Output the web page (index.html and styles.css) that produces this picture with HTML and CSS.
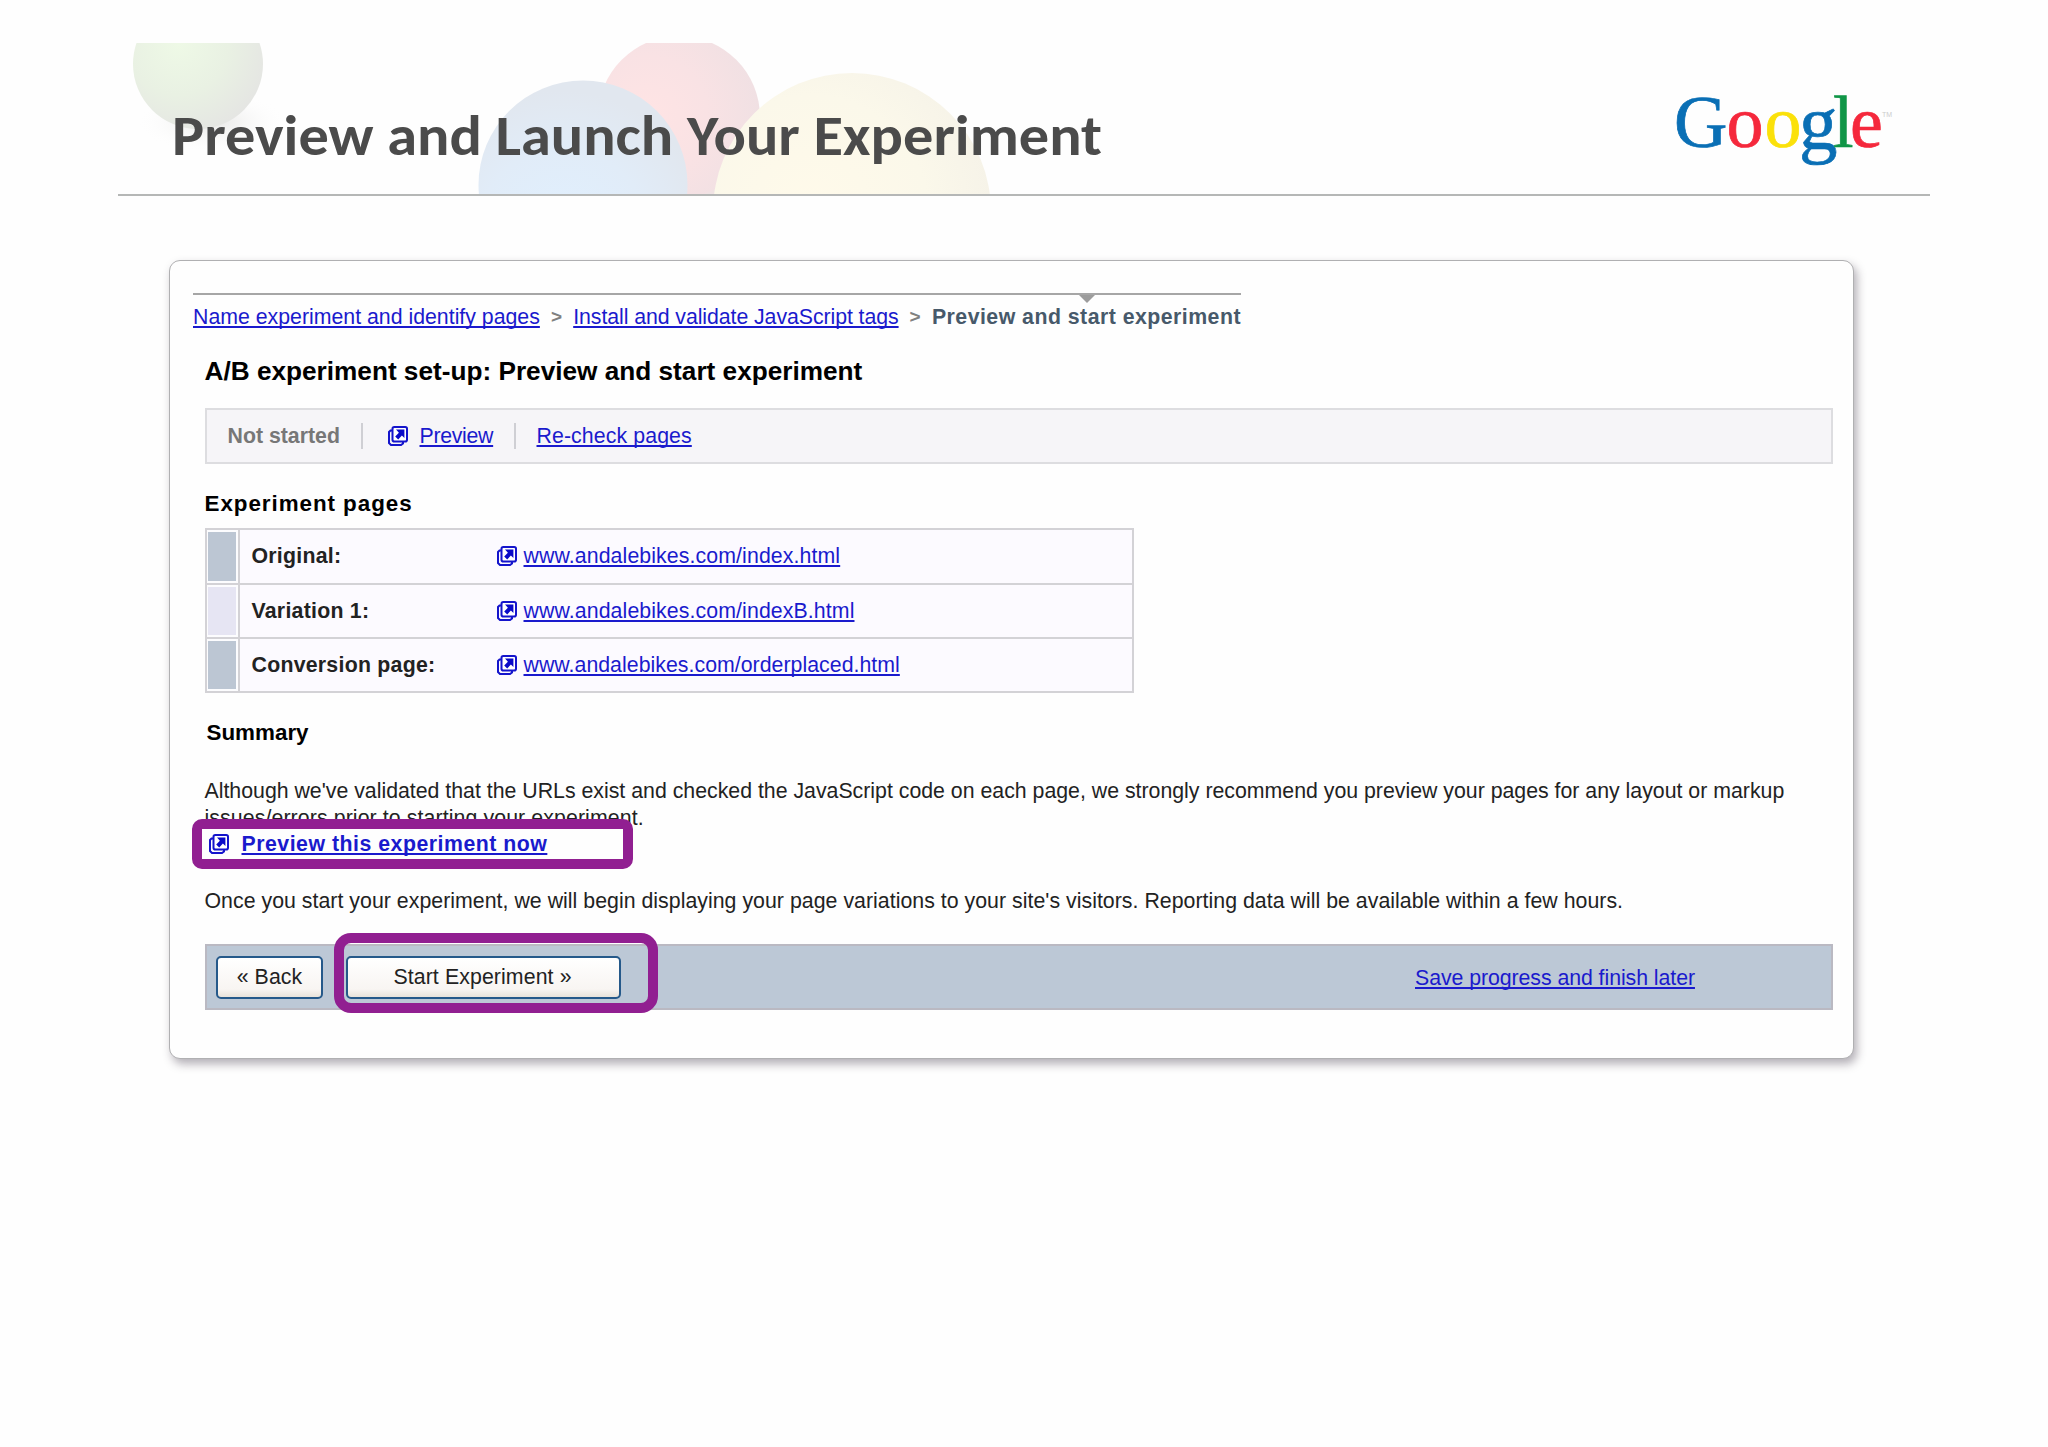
FILE: index.html
```html
<!DOCTYPE html>
<html lang="en">
<head>
  <meta charset="UTF-8" />
  <meta name="viewport" content="width=device-width, initial-scale=1.0"/>
  <title>Preview and Launch Your Experiment</title>
  <link rel="stylesheet" href="styles.css">
</head>
<body>

  <!-- Shared "open in new window" icon -->
  <svg class="defs" width="0" height="0">
    <symbol id="popup" viewBox="0 0 20 20">
      <path d="M4 4.5H2.5L1 6v11l2 2h10l2-1.5V16" fill="none" stroke="#1414cc" stroke-width="2"/>
      <rect x="4.5" y="1" width="14.5" height="14.6" rx="1.8" fill="#fff" stroke="#1414cc" stroke-width="2"/>
      <path d="M8 3.5h8.4v8.4l-2.5-2.3-3.7 3.8-3-2.8 3.7-3.8z" fill="#0a0ac8"/>
    </symbol>
  </svg>

  <header>
    <svg class="balloons" width="880" height="151" viewBox="130 43 880 151">
      <defs>
        <radialGradient id="green" cx="0.35" cy="0.35" r="0.7">
          <stop offset="0" stop-color="#eef9e6"/><stop offset="0.55" stop-color="#e9f1e3"/><stop offset="1" stop-color="#e5e6e3"/>
        </radialGradient>
        <radialGradient id="blue" cx="0.4" cy="0.75" r="0.7">
          <stop offset="0" stop-color="#e0f0ff"/><stop offset="0.6" stop-color="#e1ecf8"/><stop offset="1" stop-color="#e1e7ef"/>
        </radialGradient>
        <radialGradient id="red" cx="0.3" cy="0.5" r="0.75">
          <stop offset="0" stop-color="#ffe4e4"/><stop offset="0.5" stop-color="#f9e2e4"/><stop offset="1" stop-color="#efe0e3"/>
        </radialGradient>
        <radialGradient id="yellow" cx="0.35" cy="0.5" r="0.7">
          <stop offset="0" stop-color="#fffaea"/><stop offset="0.6" stop-color="#fbf8ea"/><stop offset="1" stop-color="#f5f2e8"/>
        </radialGradient>
        <radialGradient id="shade">
          <stop offset="0" stop-color="#e6e6e4"/><stop offset="1" stop-color="#fefefe" stop-opacity="0"/>
        </radialGradient>
      </defs>
      <ellipse cx="212" cy="122" rx="75" ry="30" fill="url(#shade)"/>
      <circle cx="198" cy="64" r="65" fill="url(#green)"/>
      <path d="M670 120h80l-30 40v34h-50z" fill="#f0e3e4"/>
      <circle cx="679" cy="117" r="81" fill="url(#red)"/>
      <circle cx="583" cy="185" r="104.5" fill="url(#blue)"/>
      <circle cx="852" cy="212" r="139" fill="url(#yellow)"/>
    </svg>
    <h1>
      <svg width="950" height="80">
        <text x="1" y="59.5" textLength="930" lengthAdjust="spacingAndGlyphs">Preview and Launch Your Experiment</text>
      </svg>
    </h1>
    <svg class="logo" width="225" height="124" viewBox="1670 66 225 124">
      <text y="147"><tspan x="1674" class="g-blue">G</tspan><tspan x="1726.5" class="g-red">o</tspan><tspan x="1764.5" class="g-yellow">o</tspan><tspan x="1799" y="149" class="g-blue low">g</tspan><tspan x="1833" y="147" class="g-green">l</tspan><tspan x="1850" class="g-red">e</tspan></text>
      <text class="tm" x="1882" y="117">TM</text>
    </svg>
  </header>

  <main>
    <nav class="steps">
      <a href="#" class="step1">Name experiment and identify pages</a>
      <span class="sep">&gt;</span>
      <a href="#" class="step2">Install and validate JavaScript tags</a>
      <span class="sep">&gt;</span>
      <b>Preview and start experiment</b>
    </nav>

    <div class="content">
      <h2>A/B experiment set-up: Preview and start experiment</h2>

      <div class="status-bar">
        <b>Not started</b>
        <span class="preview"><svg class="icon"><use href="#popup"/></svg><a href="#">Preview</a></span>
        <a href="#" class="recheck">Re-check pages</a>
      </div>

      <h3>Experiment pages</h3>
      <div class="pages">
        <div class="page-row">
          <div class="swatch"></div>
          <b>Original:</b>
          <svg class="icon"><use href="#popup"/></svg><a href="#">www.andalebikes.com/index.html</a>
        </div>
        <div class="page-row variation">
          <div class="swatch"></div>
          <b>Variation 1:</b>
          <svg class="icon"><use href="#popup"/></svg><a href="#">www.andalebikes.com/indexB.html</a>
        </div>
        <div class="page-row">
          <div class="swatch"></div>
          <b>Conversion page:</b>
          <svg class="icon"><use href="#popup"/></svg><a href="#" class="long">www.andalebikes.com/orderplaced.html</a>
        </div>
      </div>

      <h3 class="summary">Summary</h3>
      <p class="advice">Although we've validated that the URLs exist and checked the JavaScript code on each page, we strongly recommend you preview your pages for any layout or markup<br><span>issues/errors prior to starting your experiment.</span></p>
      <div class="preview-now">
        <svg class="icon"><use href="#popup"/></svg><a href="#">Preview this experiment now</a>
      </div>
      <p class="note">Once you start your experiment, we will begin displaying your page variations to your site's visitors. Reporting data will be available within a few hours.</p>

      <div class="actions">
        <button class="back">« Back</button>
        <div class="start-wrap">
          <button class="start">Start Experiment »</button>
          <div class="highlight"></div>
        </div>
        <a href="#">Save progress and finish later</a>
      </div>
    </div>
  </main>

</body>
</html>
```
FILE: styles.css
```css
* { box-sizing: border-box; margin: 0; padding: 0; }
body {
  min-height: 1447px;
  background-color: #fefefe;
  color: #222;
  font-family: "Liberation Sans", Arial, sans-serif;
  font-size: 21.3px;
  line-height: 26px;
  white-space: nowrap;
}
a { color: #1a1acd; text-decoration: underline; text-decoration-thickness: 2px; text-underline-offset: 2px; text-decoration-skip-ink: none; }
.defs { position: absolute; }
.icon { width: 20px; height: 20px; flex: none; }

header {
  position: relative;
  display: flex;
  justify-content: space-between;
  width: 1812px;
  height: 196px;
  margin-left: 118px;
  padding: 66px 35px 0 53px;
  border-bottom: 2px solid #b5b7b6;
}
.balloons { position: absolute; left: 12px; top: 43px; }
h1 { position: relative; margin-top: 29px; height: 80px; }
h1 text {
  font-family: Carlito, Lato, sans-serif;
  font-weight: bold;
  font-size: 56px;
  fill: #4b4b4b;
}
.logo text { font-family: "Liberation Serif", serif; font-size: 74px; stroke-width: 0.7; }
.logo .low { font-size: 77px; }
.logo .tm { font-family: "Liberation Sans", sans-serif; font-size: 7px; fill: #ccc; }
.g-blue { fill: #0a6fb5; stroke: #0a6fb5; }
.g-red { fill: #f5283c; stroke: #f5283c; }
.g-yellow { fill: #fbe10a; stroke: #fbe10a; }
.g-green { fill: #109647; stroke: #109647; }

main {
  width: 1685px;
  margin: 64px 0 0 169px;
  padding: 32px 19px 48px 23px;
  background-color: #fefefe;
  border: 1px solid #b0b0b2;
  border-radius: 11px;
  box-shadow: 3px 5px 10px rgba(40,30,50,0.35);
}

.steps {
  position: relative;
  display: flex;
  width: 1048px;
  padding-top: 9px;
  border-top: 2px solid #a6a6a6;
}
.steps::after {
  content: "";
  position: absolute;
  left: 886px;
  top: 0;
  border: 8px solid transparent;
  border-top: 8px solid #9c9c9c;
  border-bottom: 0;
}
.steps b { color: #47596a; letter-spacing: 0.47px; }
.step2 { letter-spacing: -0.07px; }
.sep { width: 33.5px; padding-left: 11px; font-weight: bold; color: #808080; font-size: 19px; }

.content { padding: 0 1px 0 11.5px; }
h2 { margin-top: 26px; font-size: 26.2px; line-height: 30px; color: #000; }
h3 { margin-top: 27px; font-size: 22.4px; letter-spacing: 0.95px; color: #000; }

.status-bar {
  display: flex;
  align-items: center;
  height: 56px;
  margin-top: 22px;
  padding-left: 21px;
  background-color: #f6f5f8;
  border: 2px solid #dddde0;
}
.status-bar b { color: #777; width: 133px; }
.preview, .recheck { display: flex; }
.preview {
  align-items: center;
  width: 155px;
  padding-left: 25px;
  border-left: 2px solid #cfcfd4;
  border-right: 2px solid #cfcfd4;
}
.preview a { margin-left: 12px; letter-spacing: -0.3px; }
.recheck { margin-left: 21px; letter-spacing: 0.1px; }

.pages {
  width: 929px;
  margin-top: 11px;
  background-color: #fcfaff;
  border: 2px solid #d3d2d6;
}
.page-row { display: flex; align-items: center; height: 54.5px; border-bottom: 2px solid #d3d2d6; }
.page-row:last-child { height: 52px; border-bottom: 0; }
.swatch {
  width: 31px;
  height: 100%;
  border: 2px solid #fcfcfe;
  border-left-width: 1px;
  background-color: #bcc6d3;
  background-clip: padding-box;
  box-shadow: 2px 0 0 #d3d2d6;
}
.variation .swatch { background-color: #e6e5f3; }
.page-row b { width: 245px; margin-left: 14px; letter-spacing: 0.25px; }
.page-row a { margin-left: 7px; letter-spacing: 0.1px; }
.page-row .long { letter-spacing: 0.03px; }

.summary { padding-left: 2px; letter-spacing: 0; }
.advice { margin-top: 32px; line-height: 26.5px; }
.advice span { letter-spacing: 0.1px; }
.preview-now {
  position: relative;
  display: flex;
  align-items: center;
  width: 441px;
  height: 50px;
  margin: -12px 0 0 -13px;
  padding: 0 0 1px 7px;
  background-color: #fefefe;
  border: 10px solid #911f91;
  border-radius: 10px;
}
.preview-now a { margin-left: 13px; font-weight: bold; letter-spacing: 0.5px; }
.note { margin-top: 19px; letter-spacing: 0.03px; }

.actions {
  display: flex;
  align-items: center;
  height: 66px;
  margin-top: 30px;
  padding-left: 9.5px;
  background-color: #bcc8d6;
  border: 2px solid #bab9c2;
}
button {
  height: 43px;
  font: inherit;
  color: #222;
  border: 2px solid #25598a;
  border-radius: 5px;
  background-image: linear-gradient(#fff, #f8f5f2 80%, #e8e2da);
}
.back { width: 107px; letter-spacing: 0.1px; }
.start-wrap { position: relative; display: flex; margin-left: 23px; }
.start { width: 275px; padding-right: 2px; letter-spacing: 0.1px; }
.highlight {
  position: absolute;
  left: -12px;
  top: -23px;
  width: 324px;
  height: 80px;
  border: 10px solid #911f91;
  border-radius: 17px;
}
.actions a { margin-left: 794px; padding-top: 2px; letter-spacing: -0.06px; }
```
